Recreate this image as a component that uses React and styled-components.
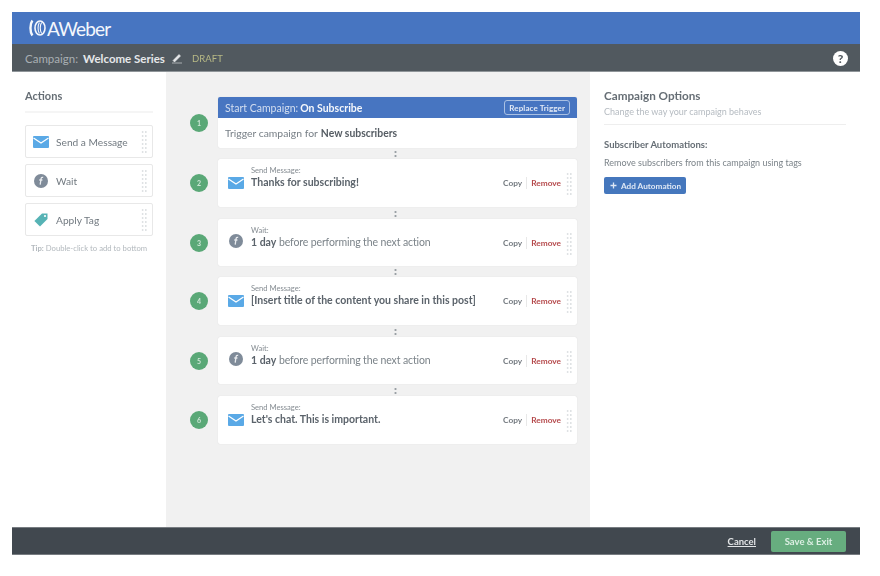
import React from 'react';
import styled, { createGlobalStyle } from 'styled-components';

const Global = createGlobalStyle`
  html, body { margin: 0; padding: 0; background: #fff; }
  body { font-family: Lato, "Noto Sans", "Liberation Sans", sans-serif; color: #5b636b; }
  #root { width: 880px; height: 576px; overflow: hidden; }
`;
const Page = styled.div`
  width: 880px; height: 576px; box-sizing: border-box; padding: 12px 20px 21px 12px;
  filter: blur(0.75px);
`;
const Shell = styled.div`
  height: 100%; display: flex; flex-direction: column;
`;
const Brand = styled.header`
  height: 32px; flex: none; background: #4775c1; display: flex; align-items: center;
  padding-left: 17px; gap: 1px; color: #fff;
`;
const Wordmark = styled.span`
  font-size: 19px; line-height: 1; letter-spacing: -0.8px; color: #f4f7fc; margin-top: 1px;
`;
const CampaignBar = styled.div`
  height: 28px; flex: none; box-sizing: border-box; background: #51595f; border-bottom: 1px solid #8f9599;
  display: flex; align-items: center; padding: 1px 12px 0 13px; font-size: 11.5px; color: #a9afb3;
`;
const CampaignName = styled.strong`
  color: #e6e8ea; font-weight: 700; margin-left: 5px;
`;
const Pencil = styled.svg`
  width: 12px; height: 12px; margin-left: 6px;
`;
const Draft = styled.span`
  margin-left: 9px; color: #b7b985; font-size: 9.5px; letter-spacing: 0.1px;
`;
const Help = styled.span`
  margin-left: auto; width: 15px; height: 15px; border-radius: 50%; background: #fff; color: #51595f;
  font-size: 12px; font-weight: 900; display: flex; align-items: center; justify-content: center;
`;
const Body = styled.main`
  flex: 1; min-height: 0; display: grid; grid-template-columns: 154px 424px 270px;
`;
const Sidebar = styled.aside`
  background: #fff; padding: 17px 13px 0;
`;
const SideTitle = styled.h2`
  margin: 0; font-size: 11px; line-height: 14px; font-weight: 700; color: #666e75;
  padding-bottom: 8px; border-bottom: 2px solid #f5f5f5;
`;
const ToolList = styled.div`
  display: flex; flex-direction: column; gap: 6px; margin-top: 12px;
`;
const Tool = styled.div`
  height: 33px; box-sizing: border-box; border: 1px solid #e8e8e8; border-radius: 2px; background: #fff;
  display: flex; align-items: center; padding: 0 5px 0 7px; font-size: 10.2px; color: #727a81;
`;
const ToolIcon = styled.span`
  width: 16px; display: flex; justify-content: center; margin-right: 7px; flex: none;
`;
const Grip = styled.span`
  margin-left: auto; width: 6px; height: ${p => p.$h || 23}px; flex: none;
  background-image: radial-gradient(circle, #dfe2e4 0.8px, transparent 1px);
  background-size: 3.2px 4px;
`;
const Tip = styled.p`
  margin: 7px 0 0; text-align: center; font-size: 7.7px; color: #b3b9be; line-height: 10px;
  b { font-weight: 700; }
`;
const Canvas = styled.section`
  background: #f1f1f1; padding: 25px 13px 0 24px;
`;
const Step = styled.div`
  display: flex; align-items: center; gap: 10px;
`;
const Badge = styled.span`
  width: 18px; height: 18px; border-radius: 50%; background: #5aa877; color: #cfe6d8; flex: none;
  font-size: 7px; font-weight: 700; display: flex; align-items: center; justify-content: center;
`;
const Card = styled.div`
  flex: 1; height: ${p => p.$h}px; box-sizing: border-box; background: #fff; border-radius: 2px;
  box-shadow: 0 0 1px rgba(0,0,0,0.15);
  display: flex; align-items: flex-start; padding: 7px 5px 0 10px;
`;
const TriggerCard = styled.div`
  flex: 1; height: 51px; background: #fff; border-radius: 2px; box-shadow: 0 0 1px rgba(0,0,0,0.15);
  display: flex; flex-direction: column;
`;
const TriggerHead = styled.div`
  height: 21px; background: #4775c1; border-radius: 2px 2px 0 0; display: flex; align-items: center;
  padding: 0 7px 0 7px; color: #d3def0; font-size: 10.5px;
  strong { color: #f3f6fb; font-weight: 700; margin-left: 2px; }
`;
const ReplaceBtn = styled.span`
  margin-left: auto; height: 13px; border: 1px solid #a9c0e3; border-radius: 3px; padding: 0 4px;
  color: #e3eaf6; font-size: 8px; font-weight: 700; display: flex; align-items: center; letter-spacing: 0.1px;
`;
const TriggerBody = styled.div`
  flex: 1; display: flex; align-items: center; padding: 0 7px; font-size: 10.4px; color: #767e85;
  strong { color: #555c63; font-weight: 700; margin-left: 3px; }
`;
const CardIcon = styled.span`
  width: 16px; margin: ${p => p.$top}px 7px 0 0; display: flex; justify-content: center; flex: none;
`;
const CardText = styled.div`
  flex: 1; min-width: 0; display: flex; flex-direction: column;
`;
const Kicker = styled.span`
  font-size: 7.6px; line-height: 8px; color: #858c92;
`;
const Headline = styled.div`
  margin-top: 2px; font-size: 10.5px; line-height: 13px; color: #7b8389; white-space: nowrap; letter-spacing: -0.12px;
  strong { font-weight: 700; color: #5b636b; letter-spacing: 0; }
`;
const Actions = styled.div`
  display: flex; align-items: center; margin-top: 11px; font-size: 8.3px; font-weight: 700;
`;
const Copy = styled.span`
  color: #73797f; padding-right: 4px; border-right: 1px solid #e8e8e8; line-height: 12px;
`;
const Remove = styled.span`
  color: #b5494b; padding-left: 4px; margin-right: 5px;
`;
const CardGrip = styled(Grip)`
  margin: 6px 0 0 0;
`;
const Connector = styled.div`
  height: ${p => p.$h}px; display: flex; align-items: center; justify-content: center; padding-left: 23px;
  &::after { content: ""; width: 3px; height: 7px;
    background-image: radial-gradient(circle, #9aa0a5 1px, transparent 1.2px);
    background-size: 3px 4px; }
`;
const Options = styled.aside`
  background: #fff; padding: 16px 14px 0;
`;
const OptionsTitle = styled.h2`
  margin: 0; font-size: 11.7px; line-height: 14px; font-weight: 700; color: #666e75;
`;
const OptionsSub = styled.p`
  margin: 4px 0 0; font-size: 9px; line-height: 11px; color: #b5bbc1;
  padding-bottom: 7px; border-bottom: 1px solid #eeeeee;
`;
const OptionsHeading = styled.h3`
  margin: 14px 0 0; font-size: 9.5px; line-height: 12px; font-weight: 700; color: #666e75;
`;
const OptionsText = styled.p`
  margin: 6px 0 0; font-size: 9px; line-height: 11px; color: #7b8389;
`;
const AddButton = styled.span`
  display: inline-flex; align-items: center; gap: 4px; margin-top: 9px; height: 17px; box-sizing: border-box;
  padding: 0 5px 0 6px; background: #4577bd; border-radius: 2px; color: #dfe8f5; font-size: 8.2px; font-weight: 700;
`;
const Footer = styled.footer`
  height: 28px; flex: none; box-sizing: border-box; background: #41484f; border-top: 1px solid #777c81; border-bottom: 1px solid #777c81;
  display: flex; align-items: center; justify-content: flex-end; padding-right: 14px; gap: 15px;
`;
const Cancel = styled.a`
  color: #e2e4e6; font-size: 9.5px; font-weight: 700; text-decoration: underline;
`;
const Save = styled.span`
  width: 75px; height: 21px; border-radius: 2px; background: #67ad7f; color: #dcefe3; font-size: 9.5px; font-weight: 700;
  display: flex; align-items: center; justify-content: center;
`;

const Mail = () => (
  <svg width="16" height="12" viewBox="0 0 16 12">
    <rect width="16" height="12" rx="1" fill="#5aa9e6" />
    <path d="M0.5 2 L8 7 L15.5 2" fill="none" stroke="#fff" strokeWidth="1.2" />
  </svg>
);
const Clock = () => (
  <svg width="14" height="14" viewBox="0 0 14 14">
    <circle cx="7" cy="7" r="7" fill="#7f8b99" />
    <path d="M9.2 3.4 C7.8 3 7.2 3.8 7 5 L6.2 10.6 M5.3 6 H8.4" fill="none" stroke="#e8ebee" strokeWidth="1.3" />
  </svg>
);
const TagIcon = () => (
  <svg width="16" height="16" viewBox="0 0 16 16">
    <path d="M9 1.5 H14.5 V7 L7 14.6 L1.4 9 Z" fill="#56b3b5" />
    <circle cx="12" cy="4" r="1.1" fill="#fff" />
  </svg>
);
const Logo = () => (
  <svg width="17" height="18" viewBox="0 0 17 18">
    <path d="M3.4 1.5 C0.8 5 0.8 13 3.4 16.5" fill="none" stroke="#f4f7fc" strokeWidth="2.4" />
    <ellipse cx="11" cy="9" rx="5" ry="7" fill="none" stroke="#f4f7fc" strokeWidth="1.6" />
    <path d="M10.4 3.5 C8.6 6.5 8.6 11.5 10.4 14.5 M12.6 3.5 C10.8 6.5 10.8 11.5 12.6 14.5" fill="none" stroke="#f4f7fc" strokeWidth="1.1" />
  </svg>
);

const steps = [
  { n: 2, h: 48, gap: 12, kind: 'mail', kicker: 'Send Message:', body: <strong>Thanks for subscribing!</strong> },
  { n: 3, h: 47, gap: 11, kind: 'wait', kicker: 'Wait:', body: <><strong>1 day</strong> before performing the next action</> },
  { n: 4, h: 48, gap: 12, kind: 'mail', kicker: 'Send Message:', body: <strong>[Insert title of the content you share in this post]</strong> },
  { n: 5, h: 47, gap: 12, kind: 'wait', kicker: 'Wait:', body: <><strong>1 day</strong> before performing the next action</> },
  { n: 6, h: 48, gap: 0, kind: 'mail', kicker: 'Send Message:', body: <strong>Let's chat. This is important.</strong> },
];

export default function App() {
  return (
    <>
      <Global />
      <Page>
        <Shell>
          <Brand><Logo /><Wordmark>AWeber</Wordmark></Brand>
          <CampaignBar>
            Campaign:<CampaignName>Welcome Series</CampaignName>
            <Pencil viewBox="0 0 12 12"><path d="M2 8.5 L8 2.5 L9.5 4 L3.5 10 Z M1 11 H11" fill="#e6e8ea" stroke="#e6e8ea" strokeWidth="0.6" /></Pencil>
            <Draft>DRAFT</Draft>
            <Help>?</Help>
          </CampaignBar>
          <Body>
            <Sidebar>
              <SideTitle>Actions</SideTitle>
              <ToolList>
                <Tool><ToolIcon><Mail /></ToolIcon>Send a Message<Grip /></Tool>
                <Tool><ToolIcon><Clock /></ToolIcon>Wait<Grip /></Tool>
                <Tool><ToolIcon><TagIcon /></ToolIcon>Apply Tag<Grip /></Tool>
              </ToolList>
              <Tip><b>Tip:</b> Double-click to add to bottom</Tip>
            </Sidebar>
            <Canvas>
              <Step>
                <Badge>1</Badge>
                <TriggerCard>
                  <TriggerHead>Start Campaign:<strong>On Subscribe</strong><ReplaceBtn>Replace Trigger</ReplaceBtn></TriggerHead>
                  <TriggerBody>Trigger campaign for<strong>New subscribers</strong></TriggerBody>
                </TriggerCard>
              </Step>
              <Connector $h={11} />
              {steps.map(s => (
                <React.Fragment key={s.n}>
                  <Step>
                    <Badge>{s.n}</Badge>
                    <Card $h={s.h}>
                      <CardIcon $top={s.kind === 'mail' ? 11 : 8}>{s.kind === 'mail' ? <Mail /> : <Clock />}</CardIcon>
                      <CardText>
                        <Kicker>{s.kicker}</Kicker>
                        <Headline>{s.body}</Headline>
                      </CardText>
                      <Actions><Copy>Copy</Copy><Remove>Remove</Remove></Actions>
                      <CardGrip />
                    </Card>
                  </Step>
                  {s.gap > 0 && <Connector $h={s.gap} />}
                </React.Fragment>
              ))}
            </Canvas>
            <Options>
              <OptionsTitle>Campaign Options</OptionsTitle>
              <OptionsSub>Change the way your campaign behaves</OptionsSub>
              <OptionsHeading>Subscriber Automations:</OptionsHeading>
              <OptionsText>Remove subscribers from this campaign using tags</OptionsText>
              <AddButton>
                <svg width="7" height="7" viewBox="0 0 7 7"><path d="M3.5 0.5 V6.5 M0.5 3.5 H6.5" stroke="#dfe8f5" strokeWidth="1.3" /></svg>
                Add Automation
              </AddButton>
            </Options>
          </Body>
          <Footer>
            <Cancel>Cancel</Cancel>
            <Save>Save &amp; Exit</Save>
          </Footer>
        </Shell>
      </Page>
    </>
  );
}
